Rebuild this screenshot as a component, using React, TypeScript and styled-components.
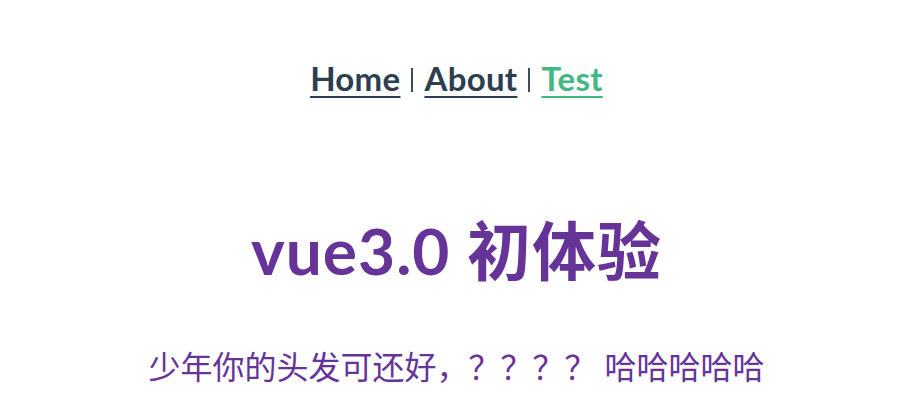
import styled, { createGlobalStyle } from "styled-components";

const GlobalStyle = createGlobalStyle`
  html, body {
    margin: 0;
    padding: 0;
    background: #ffffff;
  }
`;

const AppRoot = styled.div`
  font-family: Lato, "Noto Sans CJK SC", sans-serif;
  -webkit-font-smoothing: antialiased;
  text-align: center;
  color: #2c3e50;
  padding-left: 7px;
`;

const Nav = styled.nav`
  padding: 58px 30px 0;
  font-size: 33px;
  line-height: 40px;
  letter-spacing: 0.3px;
`;

const NavLink = styled.a<{ $active?: boolean }>`
  font-weight: 700;
  color: ${(p) => (p.$active ? "#42b983" : "#2c3e50")};
  text-decoration: underline;
  text-decoration-thickness: 2px;
  text-underline-offset: 5px;
  cursor: pointer;
`;

const Separator = styled.span`
  display: inline-block;
  width: 2px;
  height: 24px;
  margin: 0 11px;
  background: #3d4d5c;
  vertical-align: -1px;
`;

const Title = styled.h1`
  margin: 113px 0 0;
  font-size: 64px;
  font-weight: 700;
  line-height: 80px;
  letter-spacing: 1px;
  color: #663399;
`;

const Subtitle = styled.p`
  margin: 56px 0 0;
  font-size: 32px;
  line-height: 40px;
  color: #663399;
`;

export default function App() {
  return (
    <>
      <GlobalStyle />
      <AppRoot>
        <Nav>
          <NavLink>Home</NavLink>
          <Separator />
          <NavLink>About</NavLink>
          <Separator />
          <NavLink $active>Test</NavLink>
        </Nav>
        <Title>vue3.0 初体验</Title>
        <Subtitle>少年你的头发可还好，？？？？ 哈哈哈哈哈</Subtitle>
      </AppRoot>
    </>
  );
}
